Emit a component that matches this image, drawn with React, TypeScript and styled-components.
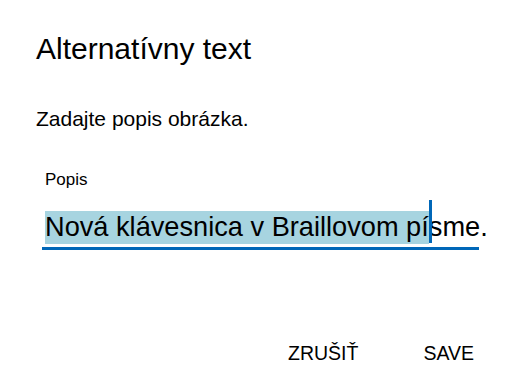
import React from "react";
import styled, { createGlobalStyle } from "styled-components";

const Global = createGlobalStyle`
  html, body {
    margin: 0;
    padding: 0;
    background: #fff;
  }
  body {
    font-family: "Liberation Sans", Arial, sans-serif;
    color: #000;
  }
`;

const Dialog = styled.div`
  width: 520px;
  height: 380px;
  box-sizing: border-box;
  padding: 34px 46px 0 36px;
  display: flex;
  flex-direction: column;
`;

const Title = styled.h1`
  margin: 0;
  font-size: 30px;
  font-weight: 400;
  line-height: 30px;
`;

const Hint = styled.p`
  margin: 44px 0 0;
  font-size: 21px;
  line-height: 21px;
`;

const Label = styled.label`
  margin: 42px 0 0 9px;
  font-size: 17px;
  line-height: 17px;
`;

const Field = styled.div`
  margin: 12px 0 0 6px;
  width: 437px;
  box-sizing: border-box;
  padding: 0 0 3px 3px;
  border-bottom: 3px solid #0067b8;
  display: flex;
  align-items: flex-end;
  font-size: 27.2px;
  white-space: nowrap;
`;

const Chunk = styled.span<{ selected?: boolean }>`
  display: block;
  flex-shrink: 0;
  height: 33px;
  line-height: 31px;
  background: ${({ selected }) => (selected ? "#a7d4e0" : "transparent")};
`;

const Caret = styled.span`
  display: block;
  flex-shrink: 0;
  width: 3px;
  height: 43px;
  margin: 0 -3px 1px 0;
  background: #0067b8;
  position: relative;
  z-index: 1;
`;

const Actions = styled.div`
  margin-top: 93px;
  display: flex;
  justify-content: flex-end;
  gap: 65px;
`;

const Action = styled.button`
  border: 0;
  background: none;
  padding: 0;
  font-family: "Liberation Sans", Arial, sans-serif;
  font-size: 19.5px;
  line-height: 20px;
  color: #000;
  cursor: pointer;
`;

export default function App() {
  return (
    <>
      <Global />
      <Dialog>
        <Title>Alternatívny text</Title>
        <Hint>Zadajte popis obrázka.</Hint>
        <Label>Popis</Label>
        <Field>
          <Chunk selected>Nová klávesnica v Braillovom pí</Chunk>
          <Caret />
          <Chunk>sme.</Chunk>
        </Field>
        <Actions>
          <Action>ZRUŠIŤ</Action>
          <Action>SAVE</Action>
        </Actions>
      </Dialog>
    </>
  );
}
